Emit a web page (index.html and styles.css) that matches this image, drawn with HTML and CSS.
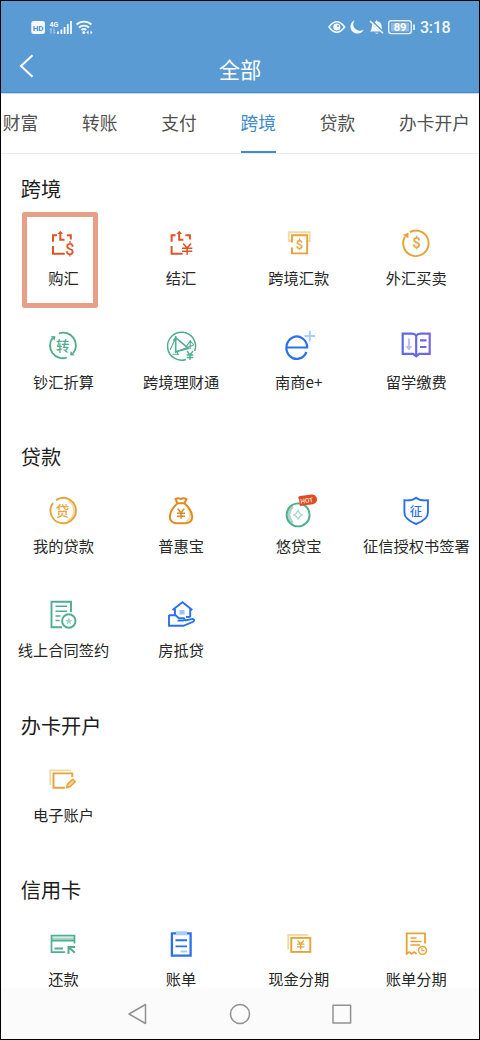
FILE: index.html
```html
<!DOCTYPE html>
<html lang="zh-CN">
<head>
<meta charset="utf-8">
<title>全部</title>
<link rel="stylesheet" href="styles.css">
</head>
<body>
<div class="screen">
  <header class="header">
    <div class="status">
      <svg class="status-left" width="64" height="18" viewBox="0 0 64 18">
        <rect x="0.3" y="3" width="13.6" height="13" rx="2.2" fill="#f4f9ff"/>
        <text x="7.1" y="12.7" class="hd">HD</text>
        <text x="18.5" y="8.6" class="net">4G</text>
        <path d="M20 10.5v5M18.8 12l1.2-1.5M23 10.5v5M24.2 14l-1.2 1.5" stroke="#b5d2ed" fill="none"/>
        <path d="M27 13.5V16M30.4 11.5V16M33.6 9V16M36.8 6V16M40 3V16" stroke="#f4f9ff" stroke-width="1.8"/>
        <path d="M45.500 6.500a11 11 0 0 1 15 0M48 9.500a7.400 7.400 0 0 1 10 0M50.400 12.200a4 4 0 0 1 5-.3" stroke="#f4f9ff" stroke-width="1.800" fill="none"/>
        <circle cx="52.800" cy="14.600" r="1.500" fill="#f4f9ff"/>
        <path d="M57.500 12.500l-2 2 2 2zM59.500 12.500l2 2-2 2z" fill="#f4f9ff"/>
      </svg>
      <div class="status-right">
        <svg width="87" height="18" viewBox="0 0 87 18">
          <path d="M1 9q7.800-10.400 15.600 0q-7.800 10.400-15.600 0z" fill="none" stroke="#f4f9ff" stroke-width="1.600"/>
          <circle cx="8.800" cy="9" r="3.600" fill="#f4f9ff"/><circle cx="10" cy="8" r="1" fill="#5b9bd3"/>
          <path d="M26.600 2.200a7 7 0 1 0 9.200 9.300a6.600 6.600 0 0 1-9.200-9.300z" fill="#f4f9ff"/>
          <path d="M42 13.500c2-1.500 1.500-4 2-6.500q1-3 3.600-3.400l1-1.600 1 1.600q3.600.5 4 4.400c.2 3 .5 4.500 2 5.500z" fill="#f4f9ff"/>
          <path d="M47 14.700h3.500q-1.700 2.200-3.500 0z" fill="#f4f9ff"/>
          <path d="M42.500 2.300L55.500 15" stroke="#5b9bd3" stroke-width="3"/>
          <path d="M42 3L55 15.300" stroke="#f4f9ff" stroke-width="1.500"/>
          <rect x="60.700" y="2.800" width="22.600" height="12.800" rx="2.500" fill="none" stroke="#e6f1fc" stroke-width="1.400"/>
          <rect x="63" y="5" width="18" height="8.500" fill="#8fbae2"/>
          <text x="72" y="13" class="charge">89</text>
          <path d="M86 6.500v5.500" stroke="#f4f9ff" stroke-width="1.600"/>
        </svg>
        <span class="clock">3:18</span>
      </div>
    </div>
    <div class="titlebar">
      <svg class="back" width="16" height="26" viewBox="0 0 16 26"><path d="M13.500 2.200L2 13l11.500 10.800" fill="none" stroke="#fff" stroke-width="2"/></svg>
      <h1>全部</h1>
    </div>
  </header>

  <nav class="tabs">
    <a>财富</a><a>转账</a><a>支付</a><a class="active">跨境</a><a>贷款</a><a>办卡开户</a>
  </nav>

  <main class="content">
    <section class="group">
      <h2>跨境</h2>
      <div class="grid">
        <div class="item selected">
          <svg class="icon red" viewBox="0 0 32 32"><path d="M6 14.800V8.300h4M19.800 8.300h4v4.200M6 19v7.800h11.700M13.300 5v7.800h4.200" stroke-width="2"/><path d="M10.500 6.900l2.800-3.200 2.800 3.200z" class="solid"/><text x="22.900" y="27.700" font-size="16">$</text></svg>
          <span>购汇</span>
        </div>
        <div class="item">
          <svg class="icon red" viewBox="0 0 32 32"><path d="M6.600 14.800V8.300h4M20.400 8.300h4.500v4.200M6.600 19v7.800h11M14.200 5v7.800h4.200" stroke-width="2"/><path d="M11.400 6.900l2.800-3.200 2.800 3.200z" class="solid"/><path d="M18.200 16.500l3.900 4.500 3.900-4.500M22.100 21v6.800M17 21.200h10.300M17 24.200h10.300" stroke-width="1.600"/></svg>
          <span>结汇</span>
        </div>
        <div class="item">
          <svg class="icon gold" viewBox="0 0 32 32"><path d="M8 14H5.800V5.200h20.900V14H25" class="pale"/><path d="M9 15.500V8.300h15.200v18.100H9v-6"/><text x="16.500" y="21.900" font-size="13">$</text></svg>
          <span>跨境汇款</span>
        </div>
        <div class="item">
          <svg class="icon gold" viewBox="0 0 32 32"><path d="M9.800 5.200A12.700 12.700 0 1 1 5 9.800"/><path d="M2.800 8l5.800-2.400-.3 5.600z" class="solid"/><text x="16.400" y="21.200" font-size="15">$</text></svg>
          <span>外汇买卖</span>
        </div>
        <div class="item">
          <svg class="icon green" viewBox="0 0 32 32"><path d="M12 3.400A12.700 12.700 0 0 1 26 23.500M19.700 27.600A12.700 12.700 0 0 1 5.500 8"/><path d="M3.800 6l4.700.2-1 4.500zM27.500 25.500l-4.500-.2.800-4.300z" class="solid"/><text x="15.800" y="20.700" font-size="13.500">转</text></svg>
          <span>钞汇折算</span>
        </div>
        <div class="item">
          <svg class="icon green" viewBox="0 0 32 32"><path d="M21 29.500A14 14 0 1 1 29.700 21" stroke-width="1.500"/><path d="M10.700 6v17M8.500 10.700l2.200-3 12.700 10.600-12.700 3.500" stroke-width="1.600"/><path d="M7.500 24.200h6.500M12.500 21.500v3M5 20l5.700-12M10.700 22l18-7M25.200 10v9M21 17l4.200-6 3.500 4" stroke-width="1.100"/><path d="M22 21l3 4 3-4M25 25v5M21.700 25h6.600M21.700 27.500h6.600" stroke-width="1.400"/></svg>
          <span>跨境理财通</span>
        </div>
        <div class="item">
          <svg class="icon blue" viewBox="0 0 32 32"><path d="M3.400 17.500H24.200A10.400 11.200 0 1 0 23.400 22" stroke-width="2.200"/><path d="M26.800.8v10.400M21.600 6H32" class="pale"/></svg>
          <span>南商e+</span>
        </div>
        <div class="item">
          <svg class="icon violet" viewBox="0 0 32 32"><defs><linearGradient id="book"><stop stop-color="#586ae9"/><stop offset="1" stop-color="#7864e5"/></linearGradient></defs><path d="M16.200 5.500Q14.500 3.700 11.500 3.700H2.700v20.200h10.500l3 2.500 3-2.500h10.500V3.700h-8.800Q18 3.700 16.200 5.500zV26" stroke="url(#book)" stroke-width="2.200"/><path d="M20 10.300h6.500M20 17h6.500" stroke-width="2.200"/><path d="M8.900 8.500v10M6.300 16l2.600 3 2.600-3" class="pale"/></svg>
          <span>留学缴费</span>
        </div>
      </div>
    </section>

    <section class="group">
      <h2>贷款</h2>
      <div class="grid">
        <div class="item">
          <svg class="icon gold" viewBox="0 0 32 32"><path d="M21.500 6A11.300 11.300 0 0 1 20.500 26" class="pale"/><path d="M9 5.100A12.700 12.700 0 1 1 6 8"/><text x="15.600" y="20.700" font-size="13.500">贷</text></svg>
          <span>我的贷款</span>
        </div>
        <div class="item">
          <svg class="icon bag" viewBox="0 0 32 32"><path d="M23 13q5 9-1.500 13.500" class="pale"/><path d="M12.200 7.500L10.500 4.200Q13.300 2.500 16 4q2.800-1.500 5.500.2L19.800 7.500M11.500 8.200h9M12.300 8.500Q5 15 4.800 21.500 5 28.300 12 28.300h8.500q6.500-.3 6.800-6.500Q27 15 19.700 8.500" stroke-width="2"/><path d="M12.800 13.800l3.200 4 3.200-4M16 17.800v6M12 18.200h8M12 21.200h8" stroke-width="1.500"/></svg>
          <span>普惠宝</span>
        </div>
        <div class="item">
          <svg class="icon green" viewBox="0 0 32 32"><path d="M9.500 11.500Q2 20 9.500 28" class="pale" stroke-width="3"/><circle cx="15.100" cy="19.900" r="11.500"/><path d="M15.100 15.500q1.300 3 4 4.300-2.700 1.300-4 4.300-1.300-3-4-4.300 2.700-1.300 4-4.300z" class="pale" stroke-width="1.300"/><g transform="rotate(-8 23 5.500)"><path d="M17.800.3h11.400a4.900 4.900 0 0 1 0 9.900h-13V3.500Q15 .3 17.800.3z" fill="#e04a24" stroke="none"/><text x="23.800" y="8" class="hot">HOT</text></g></svg>
          <span>悠贷宝</span>
        </div>
        <div class="item">
          <svg class="icon blue" viewBox="0 0 32 32"><path d="M16.100 2.700Q20 6 27.900 5.300V17.500q0 7-11.800 11.500Q4.400 24.500 4.400 17.500V5.300Q12 6 16.100 2.700z"/><text x="16" y="20.500" font-size="12.500" font-weight="700">征</text></svg>
          <span>征信授权书签署</span>
        </div>
        <div class="item">
          <svg class="icon green" viewBox="0 0 32 32"><path d="M24 13V2.800H4.500v25.500H15"/><path d="M8.500 7.300h11.700M8.500 12.300h11.700M8.500 17h5M8.500 21.500h4" stroke-width="1.600"/><circle cx="21.800" cy="22" r="6.700"/><path d="M21.800 18.300l1.100 2.400 2.600.3-1.900 1.800.5 2.600-2.300-1.300-2.300 1.300.5-2.600-1.900-1.800 2.600-.3z" fill="#a8d8c9" stroke="none"/></svg>
          <span>线上合同签约</span>
        </div>
        <div class="item">
          <svg class="icon blue" viewBox="0 0 32 32"><rect x="14.500" y="11" width="5" height="4.500" fill="#9fc1fa" stroke="none"/><path d="M7.500 11L17.500 3.300 27.300 11M10 10v6M25.200 10v8M4 16v10.800h14.500l10-4.300q1.700-2-1-2.600L20 21.500M4 16.200h6.500l3.500 3.100h5q1.600 2-1 2.300H12.500M21 18l4.500-.2"/></svg>
          <span>房抵贷</span>
        </div>
      </div>
    </section>

    <section class="group">
      <h2>办卡开户</h2>
      <div class="grid">
        <div class="item">
          <svg class="icon gold" viewBox="0 0 32 32"><path d="M3.300 21V6.400h20.500" class="pale"/><path d="M25.300 13V9.400H6.500v14.300H18"/><path d="M19.700 23.600l.8-3.500 5.200-4.800 2.500 2.500-5 4.800z" fill="#f4d49c" stroke-width="1.600"/></svg>
          <span>电子账户</span>
        </div>
      </div>
    </section>

    <section class="group">
      <h2>信用卡</h2>
      <div class="grid">
        <div class="item">
          <svg class="icon green" viewBox="0 0 32 32"><path d="M5 10.700h22" class="pale" stroke-width="2.500"/><path d="M27.500 15.500V7.700h-23v16.500H18M4.500 12.600h23" stroke-width="1.700"/><path d="M7.500 20.500H16M21.500 26v-7H28M22 19.500l5.800 5.300" stroke-width="2"/></svg>
          <span>还款</span>
        </div>
        <div class="item">
          <svg class="icon blue" viewBox="0 0 32 32"><path d="M11 5.300H6.900v22.300h18.700V5.300H22" stroke-width="2.300"/><rect x="11" y="3.300" width="11" height="4" fill="#a9cdf1" stroke="none"/><path d="M10.500 12.300h11.500M10.500 18.400h11.500"/><path d="M15.500 23.500h6.500" class="pale"/></svg>
          <span>账单</span>
        </div>
        <div class="item">
          <svg class="icon gold" viewBox="0 0 32 32"><path d="M5.200 21.500V7h20" class="pale"/><rect x="8.300" y="9.900" width="19" height="14"/><path d="M14.500 12.500l3.200 3.300 3.200-3.300M17.700 15.800v5.500M14 16.200h7.400M14 18.800h7.400" stroke-width="1.300"/></svg>
          <span>现金分期</span>
        </div>
        <div class="item">
          <svg class="icon gold" viewBox="0 0 32 32"><path d="M25 15.500V5.300H6.700v20.400l2.500-1.700 2.500 1.800 2.500-1.800 2.500 1.800" stroke-width="1.800"/><path d="M10.500 10h6M10.500 13.500h11M10.500 17h9.500" stroke-width="1.400"/><circle cx="22.500" cy="22.400" r="3.900" stroke-width="1.500"/><path d="M22 20v2.700h2.500" stroke-width="1.200"/></svg>
          <span>账单分期</span>
        </div>
      </div>
    </section>
  </main>

  <footer class="navbar">
    <svg width="22" height="22" viewBox="0 0 22 22"><path d="M18.500 1.500v19L2 11z"/></svg>
    <svg width="22" height="22" viewBox="0 0 22 22"><circle cx="11" cy="11" r="9.500"/></svg>
    <svg width="22" height="22" viewBox="0 0 22 22"><rect x="2" y="2.300" width="17.600" height="17.600"/></svg>
  </footer>
</div>
</body>
</html>
```
FILE: styles.css
```css
*, *::before { box-sizing: border-box; }
body { margin: 0; background: #fff; font-family: "Noto Sans CJK SC", sans-serif; }
h1, h2 { margin: 0; font-weight: 400; }
svg { flex: none; overflow: visible; }

.screen {
  width: 480px;
  height: 1040px;
  border: 1px solid #000;
  display: flex;
  flex-direction: column;
  overflow: hidden;
}

/* header */
.header {
  flex: none;
  height: 92px;
  background: #5b9bd3;
  border-bottom: 1px solid #468bca;
  color: #fff;
}
.status {
  height: 52px;
  padding: 0 30px;
  display: flex;
  justify-content: space-between;
  align-items: center;
}
.status-right { display: flex; align-items: center; gap: 4px; }
.clock { font: 500 16px/18px Roboto, sans-serif; color: #f4f9ff; width: 29px; padding-top: 2px; white-space: nowrap; letter-spacing: -0.300px; }
.status-right svg { margin-right: 1px; }
.hd { font: 700 8px Roboto, sans-serif; fill: #4b8fcd; text-anchor: middle; }
.net { font: 700 7px Roboto, sans-serif; fill: #f4f9ff; }
.charge { font: 700 11px Roboto, sans-serif; fill: #fff; text-anchor: middle; }
.titlebar {
  height: 31px;
  display: grid;
  grid-template-columns: 60px 1fr 60px;
  align-items: center;
}
.back { margin: -5px 0 0 18px; }
.titlebar h1 { font-size: 21.300px; line-height: 31px; text-align: center; }

/* category tabs */
.tabs {
  flex: none;
  height: 61px;
  padding-left: 1.700px;
  border-top: 1px solid #c3dbef;
  border-bottom: 1px solid #ebebeb;
  display: flex;
  gap: 43.900px;
  white-space: nowrap;
}
.tabs a { height: 59px; font-size: 17.700px; line-height: 57px; color: #505050; }
.tabs .active { color: #3f8ccc; border-bottom: 2.500px solid #3f8ccc; }

/* service groups */
.content { flex: 1; min-height: 0; overflow: hidden; padding: 20px 3.700px 0; }
.group { margin-bottom: 8.200px; }
.group h2 { padding-left: 16px; font-size: 20.200px; line-height: 30px; color: #1c1c1c; }
.grid {
  margin-top: 22.800px;
  display: grid;
  grid-template-columns: repeat(4, 117.600px);
  grid-auto-rows: 103.700px;
}
.group:last-child { margin-bottom: 0; }
.group:last-child .grid { grid-auto-rows: 59px; }
.item {
  position: relative;
  display: flex;
  flex-direction: column;
  align-items: center;
  gap: 8.200px;
  font-size: 15.250px;
  line-height: 20px;
  color: #262626;
  white-space: nowrap;
}
.selected::before {
  content: "";
  position: absolute;
  left: 17.300px;
  top: -14.800px;
  width: 76px;
  height: 96px;
  border: 5px solid #e7a088;
  border-radius: 2px;
}

/* icons */
.icon {
  width: 32px;
  height: 32px;
  fill: none;
  stroke: var(--ink);
  stroke-width: 1.900;
}
.icon text { fill: var(--ink); stroke: none; text-anchor: middle; font-family: Roboto, "Noto Sans CJK SC", sans-serif; font-weight: 500; }
.icon .pale { stroke: var(--pale); }
.icon .solid { fill: var(--ink); stroke: none; }
.icon .hot { font-size: 6.500px; fill: #ffe3d8; }
.red { --ink: #df5426; --pale: #f4b8a0; }
.gold { --ink: #e5a338; --pale: #f5d9a5; }
.bag { --ink: #e08a20; --pale: #f7d9a0; }
.green { --ink: #50ad90; --pale: #a9d8ca; }
.blue { --ink: #2a70ef; --pale: #a5cdf5; }
.violet { --ink: #7263e8; --pale: #c0b7f4; }

/* system navigation */
.navbar {
  flex: none;
  height: 51px;
  background: #fbfbfb;
  display: flex;
  justify-content: center;
  align-items: center;
  gap: 80px;
}
.navbar svg { fill: none; stroke: #929292; stroke-width: 1.500; stroke-linejoin: round; }
```
